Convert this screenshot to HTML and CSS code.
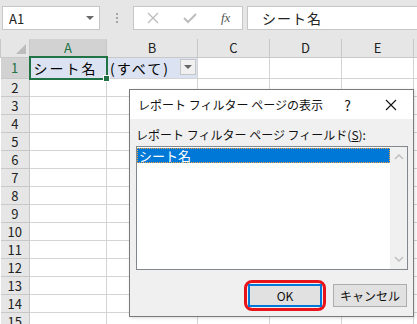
FILE: index.html
```html
<!DOCTYPE html>
<html lang="ja">
<head>
    <meta charset="UTF-8">
    <title>レポート フィルター ページの表示</title>
    <link rel="stylesheet" href="styles.css">
</head>
<body>
    <div class="topbar">
        <div class="namebox">
            <span class="nb-text">A1</span>
            <span class="nb-arrow"></span>
        </div>
        <div class="dots">
            <span></span><span></span><span></span>
        </div>
        <div class="fbtns">
            <svg class="fb-icon" width="12" height="12" viewBox="0 0 12 12">
                <path d="M1 1 L11 11 M11 1 L1 11" stroke="#bdbdbd" stroke-width="1.4" fill="none"/>
            </svg>
            <svg class="fb-icon" width="14" height="12" viewBox="0 0 14 12">
                <path d="M1 6 L5 10 L13 2" stroke="#bdbdbd" stroke-width="2" fill="none"/>
            </svg>
            <span class="fx">fx</span>
        </div>
        <div class="finput">シート名</div>
    </div>

    <div class="sheet">
        <table class="grid">
            <colgroup>
                <col class="c-rh">
                <col class="c-a">
                <col class="c-b">
                <col class="c-n">
                <col class="c-n">
                <col class="c-n">
                <col>
            </colgroup>
            <thead>
                <tr>
                    <th class="corner"><span class="tri"></span></th>
                    <th class="active-col">A</th>
                    <th>B</th>
                    <th>C</th>
                    <th>D</th>
                    <th>E</th>
                    <th></th>
                </tr>
            </thead>
            <tbody>
                <tr class="r1">
                    <th class="active-row">1</th>
                    <td class="pv sel">シート名<span class="selbox"></span><span class="handle"></span></td>
                    <td class="pv">(すべて)<span class="dd"></span></td>
                    <td></td><td></td><td></td><td></td>
                </tr>
                <tr><th>2</th><td></td><td></td><td></td><td></td><td></td><td></td></tr>
                <tr><th>3</th><td></td><td></td><td></td><td></td><td></td><td></td></tr>
                <tr><th>4</th><td></td><td></td><td></td><td></td><td></td><td></td></tr>
                <tr><th>5</th><td></td><td></td><td></td><td></td><td></td><td></td></tr>
                <tr><th>6</th><td></td><td></td><td></td><td></td><td></td><td></td></tr>
                <tr><th>7</th><td></td><td></td><td></td><td></td><td></td><td></td></tr>
                <tr><th>8</th><td></td><td></td><td></td><td></td><td></td><td></td></tr>
                <tr><th>9</th><td></td><td></td><td></td><td></td><td></td><td></td></tr>
                <tr><th>10</th><td></td><td></td><td></td><td></td><td></td><td></td></tr>
                <tr><th>11</th><td></td><td></td><td></td><td></td><td></td><td></td></tr>
                <tr><th>12</th><td></td><td></td><td></td><td></td><td></td><td></td></tr>
                <tr><th>13</th><td></td><td></td><td></td><td></td><td></td><td></td></tr>
                <tr><th>14</th><td></td><td></td><td></td><td></td><td></td><td></td></tr>
                <tr><th>15</th><td></td><td></td><td></td><td></td><td></td><td></td></tr>
            </tbody>
        </table>

        <div class="dialog">
            <div class="dlg-title">
                <span class="dlg-caption">レポート フィルター ページの表示</span>
                <span class="dlg-help">?</span>
                <svg class="dlg-close" width="12" height="12" viewBox="0 0 12 12">
                    <path d="M1 1 L11 11 M11 1 L1 11" stroke="#111" stroke-width="1.1" fill="none"/>
                </svg>
            </div>
            <div class="dlg-body">
                <div class="dlg-label">レポート フィルター ページ フィールド(<u>S</u>):</div>
                <div class="listbox">
                    <div class="items">
                        <div class="item selected">シート名</div>
                    </div>
                    <div class="scroll">
                        <svg width="10" height="6" viewBox="0 0 10 6"><path d="M1 5 L5 1 L9 5" stroke="#c2c2c2" stroke-width="1.6" fill="none"/></svg>
                        <svg width="10" height="6" viewBox="0 0 10 6"><path d="M1 1 L5 5 L9 1" stroke="#c2c2c2" stroke-width="1.6" fill="none"/></svg>
                    </div>
                </div>
                <div class="dlg-buttons">
                    <span class="mark"><button class="btn default">OK</button></span>
                    <button class="btn">キャンセル</button>
                </div>
            </div>
        </div>
    </div>
</body>
</html>
```

FILE: styles.css
```css
body {
    margin: 0;
    width: 417px;
    height: 324px;
    overflow: hidden;
    background-color: #ffffff;
    font-family: "Noto Sans CJK JP", "Noto Sans", sans-serif;
}
.topbar {
    height: 39px;
    background-color: #e6e6e6;
    display: flex;
    align-items: flex-start;
    padding-top: 6px;
    box-sizing: border-box;
}
.namebox {
    margin-left: 2px;
    width: 98px;
    height: 24px;
    box-sizing: border-box;
    background-color: #ffffff;
    border: 1px solid #c6c6c6;
    display: flex;
    align-items: center;
    justify-content: space-between;
    padding: 0 5px 0 6px;
    font-size: 13px;
    color: #222;
}
.nb-arrow {
    width: 0;
    height: 0;
    border-left: 4px solid transparent;
    border-right: 4px solid transparent;
    border-top: 4px solid #6a6a6a;
}
.dots {
    width: 33px;
    height: 24px;
    display: flex;
    flex-direction: column;
    align-items: center;
    justify-content: center;
    gap: 2px;
}
.dots span {
    width: 2px;
    height: 2px;
    background-color: #a6a6a6;
}
.fbtns {
    width: 110px;
    height: 24px;
    box-sizing: border-box;
    background-color: #ffffff;
    border: 1px solid #c6c6c6;
    display: flex;
    align-items: center;
    padding-left: 13px;
    gap: 24px;
}
.fx {
    font-family: "Liberation Serif", serif;
    font-style: italic;
    font-size: 13px;
    color: #555;
}
.finput {
    margin-left: 4px;
    flex: 1;
    height: 24px;
    box-sizing: border-box;
    background-color: #ffffff;
    border: 1px solid #c6c6c6;
    border-right: none;
    padding-left: 14px;
    font-size: 14px;
    line-height: 22px;
    color: #222;
    letter-spacing: 1px;
}
.sheet {
    position: relative;
}
.grid {
    border-collapse: collapse;
    table-layout: fixed;
    width: 421px;
    font-size: 14px;
}
.c-rh { width: 29px; }
.c-a { width: 77px; }
.c-b { width: 91px; }
.c-n { width: 72px; }
.grid th {
    background-color: #e6e6e6;
    font-weight: normal;
    color: #222;
    border: 1px solid #c8c8c8;
    height: 17px;
    padding: 0;
    font-size: 13px;
    line-height: 17px;
}
.grid thead th {
    border-top: none;
}
.grid td {
    border: 1px solid #d4d4d4;
    height: 17px;
    padding: 0;
}
.grid tbody th {
    text-align: center;
    border-left: none;
}
.corner {
    position: relative;
}
.tri {
    position: absolute;
    right: 3px;
    bottom: 3px;
    width: 0;
    height: 0;
    border-left: 10px solid transparent;
    border-bottom: 10px solid #bcbcbc;
}
.grid th.active-col {
    background-color: #d2d2d2;
    color: #217346;
    border-bottom: 2px solid #217346;
}
.grid th.active-row {
    background-color: #d2d2d2;
    color: #217346;
    border-right: 2px solid #217346;
}
.r1 td, .r1 th {
    height: 18px;
}
.pv {
    background-color: #dbe2f1;
    font-size: 14px;
    letter-spacing: 2px;
    white-space: nowrap;
    position: relative;
    padding-left: 3px !important;
}
.selbox {
    position: absolute;
    left: -2px;
    top: -2px;
    right: -2px;
    bottom: -2px;
    border: 2px solid #217346;
    z-index: 2;
}
.handle {
    position: absolute;
    right: -4px;
    bottom: -4px;
    width: 5px;
    height: 5px;
    background-color: #217346;
    border: 1px solid #ffffff;
    z-index: 3;
}
.dd {
    position: absolute;
    right: 1px;
    top: 1px;
    width: 16px;
    height: 16px;
    box-sizing: border-box;
    background-color: #f0f0f0;
    border: 1px solid #c6c6c6;
}
.dd::after {
    content: "";
    position: absolute;
    left: 3px;
    top: 5px;
    border-left: 4px solid transparent;
    border-right: 4px solid transparent;
    border-top: 4px solid #666;
}
.dialog {
    position: absolute;
    left: 129px;
    top: 50px;
    width: 285px;
    height: 228px;
    box-sizing: border-box;
    border: 1px solid #7a7a7a;
    background-color: #f0f0f0;
    font-size: 12px;
    color: #111;
    box-shadow: 1px 1px 3px rgba(0, 0, 0, 0.15);
    z-index: 5;
}
.dlg-title {
    height: 29px;
    background-color: #ffffff;
    display: flex;
    align-items: center;
    padding-left: 8px;
}
.dlg-caption {
    flex: 1;
}
.dlg-help {
    font-size: 14px;
    margin-right: 34px;
}
.dlg-close {
    margin-right: 16px;
}
.dlg-body {
    padding: 7px 5px 0 6px;
}
.dlg-label {
    height: 18px;
    line-height: 18px;
}
.listbox {
    margin-top: 2px;
    width: 272px;
    height: 124px;
    box-sizing: border-box;
    border: 1px solid #828790;
    background-color: #ffffff;
    display: flex;
}
.items {
    flex: 1;
    padding: 1px 0 0 0;
}
.item.selected {
    height: 15px;
    box-sizing: border-box;
    background-color: #0078d7;
    color: #ffffff;
    border: 1px dotted #f4a340;
    line-height: 13px;
    padding-left: 1px;
    font-size: 13px;
}
.scroll {
    width: 17px;
    background-color: #f0f0f0;
    display: flex;
    flex-direction: column;
    justify-content: space-between;
    align-items: center;
    padding: 7px 0 7px 0;
}
.dlg-buttons {
    display: flex;
    justify-content: flex-end;
    align-items: center;
    gap: 7px;
    margin-top: 10px;
    padding-right: 1px;
}
.mark {
    border: 3px solid #e8141a;
    border-radius: 8px;
    padding: 1px;
    display: flex;
}
.btn {
    width: 74px;
    height: 23px;
    box-sizing: border-box;
    background-color: #e1e1e1;
    border: 1px solid #adadad;
    font-family: "Noto Sans CJK JP", "Noto Sans", sans-serif;
    font-size: 12px;
    color: #111;
    padding: 0;
}
.btn.default {
    border: 2px solid #0078d7;
}
```
